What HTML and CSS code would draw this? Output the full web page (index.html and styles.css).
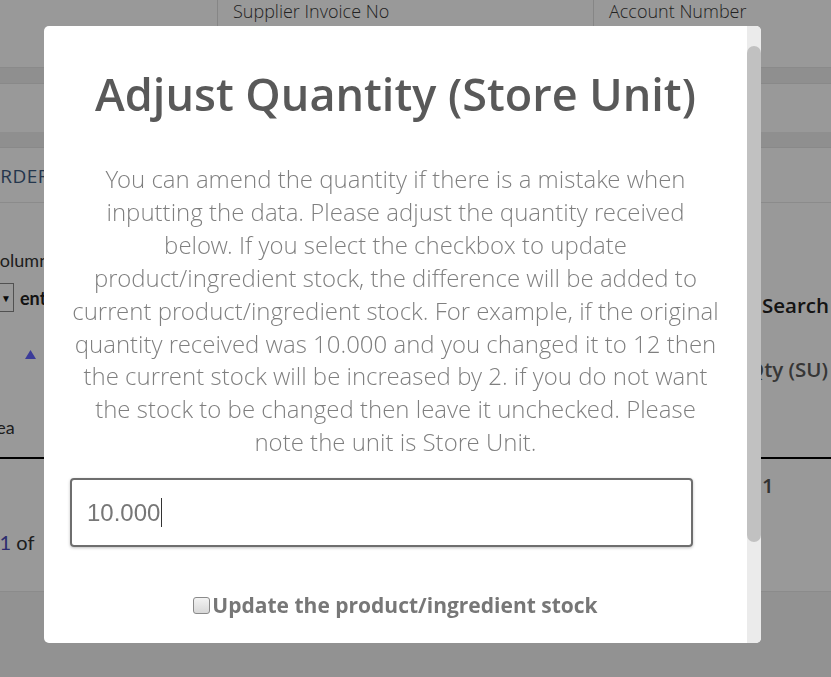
FILE: index.html
```html
<!DOCTYPE html>
<html>
<head>
<meta charset="utf-8">
<link rel="stylesheet" href="styles.css">
</head>
<body>
<div class="page">
  <div class="top-row">
    <div class="col col-a"></div>
    <div class="col col-b">Supplier Invoice No</div>
    <div class="col col-c">Account Number</div>
  </div>
  <div class="band"></div>
  <div class="plain"></div>
  <div class="band"></div>
  <div class="tabs"><span class="tab">ORDERS</span></div>
  <div class="content">
    <div class="left">
      <div class="colvis">Column visibility</div>
      <div class="show"><span class="sel">10 <span class="arr">▼</span></span><span class="entries">entries</span></div>
      <div class="sort"><svg class="tri" width="11" height="9" viewBox="0 0 11 9"><path d="M5.5 0 L11 9 L0 9 Z" fill="#6464ff"/></svg></div>
      <div class="head">Area</div>
    </div>
    <div class="right">
      <div class="search">Search</div>
      <div class="qty">Qty (SU)</div>
    </div>
  </div>
  <div class="rule"></div>
  <div class="rows">
    <div class="left">
      <div class="pager-gap"></div>
      <div class="pager">Page <a class="lnk">1</a> of</div>
    </div>
    <div class="right">
      <div class="cell">1</div>
    </div>
  </div>
  <div class="footer"></div>
</div>

<div class="overlay">
  <div class="modal">
    <div class="modal-body">
      <h2 class="title">Adjust Quantity (Store Unit)</h2>
      <p class="text">You can amend the quantity if there is a mistake when inputting the data. Please adjust the quantity received below. If you select the checkbox to update product/ingredient stock, the difference will be added to current product/ingredient stock. For example, if the original quantity received was 10.000 and you changed it to 12 then the current stock will be increased by 2. if you do not want the stock to be changed then leave it unchecked. Please note the unit is Store Unit.</p>
      <div class="field"><span class="val">10.000</span><span class="caret"></span></div>
      <label class="check"><span class="box"></span>Update the product/ingredient stock</label>
    </div>
    <div class="scroll-track"><div class="scroll-thumb"></div></div>
  </div>
</div>
</body>
</html>
```

FILE: styles.css
```css
html, body {
  margin: 0;
  padding: 0;
}
body {
  background: #ffffff;
  font-family: Lato, "Open Sans", sans-serif;
  width: 831px;
  height: 677px;
  overflow: hidden;
}
.page {
  width: 831px;
  height: 677px;
  display: flex;
  flex-direction: column;
}
.top-row {
  display: flex;
  height: 68px;
  border-bottom: 1px solid #e6e6e6;
  box-sizing: border-box;
}
.col {
  font-family: "Open Sans Light", "Open Sans", sans-serif;
  font-weight: 300;
  font-size: 18px;
  color: #3a3a3a;
  line-height: 22px;
}
.col-a { width: 217px; }
.col-b { width: 376px; border-left: 1px solid #e0e0e0; padding-left: 15px; box-sizing: border-box; }
.col-c { flex: 1; border-left: 1px solid #e0e0e0; padding-left: 15px; }
.band {
  height: 15px;
  background: #eeeeee;
  border-bottom: 1px solid #e4e4e4;
}
.plain {
  height: 48px;
}
.tabs {
  height: 52px;
  border-bottom: 1px solid #e8e8e8;
  display: flex;
  align-items: center;
  padding-top: 2px;
}
.tab {
  font-family: "Open Sans", sans-serif;
  font-size: 19px;
  color: #3d5a80;
  margin-left: -15px;
  letter-spacing: 0.5px;
}
.content {
  display: flex;
  justify-content: space-between;
  height: 254px;
}
.left {
  width: 120px;
}
.right {
  width: 69px;
}
.colvis {
  margin-top: 46px;
  font-size: 18px;
  color: #333;
  margin-left: -12px;
  white-space: nowrap;
}
.show {
  margin-top: 12px;
  display: flex;
  align-items: center;
  margin-left: -28px;
  gap: 6px;
}
.sel {
  display: inline-block;
  border: 1px solid #888;
  height: 29px;
  width: 42px;
  box-sizing: border-box;
  font-size: 13px;
  text-align: right;
  line-height: 27px;
  padding-right: 2px;
  color: #111;
}
.arr { font-size: 10px; }
.entries {
  font-weight: 700;
  font-size: 18px;
  color: #222;
}
.sort {
  margin-top: 38px;
  padding-left: 25px;
  height: 22px;
}
.tri {
  display: block;
}
.head {
  margin-top: 44px;
  font-size: 18px;
  color: #333;
  margin-left: -22px;
}
.search {
  margin-top: 88px;
  font-family: "Open Sans", sans-serif;
  font-weight: 600;
  font-size: 20.5px;
  color: #222;
}
.qty {
  margin-top: 36px;
  font-family: "Open Sans", sans-serif;
  font-weight: 600;
  font-size: 20.5px;
  color: #5a5a5a;
  margin-left: -14px;
  white-space: nowrap;
}
.rule {
  height: 2px;
  background: #000;
}
.rows {
  display: flex;
  justify-content: space-between;
  height: 132px;
  border-bottom: 1px solid #e8e8e8;
}
.pager-gap { height: 71px; }
.pager {
  font-size: 20px;
  color: #333;
  margin-left: -48px;
  white-space: nowrap;
}
.lnk { color: #4b4bb8; }
.cell {
  margin-top: 12px;
  font-family: "Open Sans", sans-serif;
  font-weight: 600;
  font-size: 20.5px;
  color: #555;
}
.footer {
  flex: 1;
  background: #f4f4f4;
}

.overlay {
  position: fixed;
  inset: 0;
  background: rgba(0, 0, 0, 0.4);
  padding: 26px 0 0 44px;
  box-sizing: border-box;
}
.modal {
  width: 717px;
  height: 617px;
  background: #ffffff;
  border-radius: 5px;
  display: flex;
  overflow: hidden;
}
.modal-body {
  flex: 1;
  display: flex;
  flex-direction: column;
  align-items: center;
}
.title {
  margin: 40px 0 0;
  font-family: "Open Sans", sans-serif;
  font-weight: 600;
  font-size: 45px;
  line-height: 56px;
  color: #595959;
}
.text {
  margin: 41px 0 0;
  width: 650px;
  font-family: "Open Sans Light", "Open Sans", sans-serif;
  font-weight: 300;
  font-size: 24px;
  line-height: 32.9px;
  color: #7f7f7f;
  text-align: center;
}
.field {
  align-self: flex-start;
  margin: 19px 0 0 26px;
  width: 623px;
  height: 69px;
  flex-shrink: 0;
  box-sizing: border-box;
  border: 2px solid #6e6e6e;
  border-radius: 4px;
  box-shadow: 0 1px 3px rgba(0, 0, 0, 0.25);
  display: flex;
  align-items: center;
  padding-left: 15px;
  font-family: "Liberation Sans", Arial, sans-serif;
  font-size: 24px;
  color: #777;
}
.caret {
  width: 1px;
  height: 29px;
  background: #333;
  margin-left: 1px;
}
.check {
  margin-top: 44px;
  display: flex;
  align-items: center;
  font-family: "Open Sans", sans-serif;
  font-weight: 700;
  font-size: 21px;
  color: #777;
}
.box {
  width: 15px;
  height: 15px;
  border: 1px solid #8a8a8a;
  border-radius: 3px;
  background: linear-gradient(#f3f3f3, #d8d8d8);
  margin-right: 2px;
}
.scroll-track {
  width: 14px;
  background: #ebebeb;
  padding-top: 20px;
}
.scroll-thumb {
  height: 496px;
  background: #c1c1c1;
  border-radius: 7px;
}
```
